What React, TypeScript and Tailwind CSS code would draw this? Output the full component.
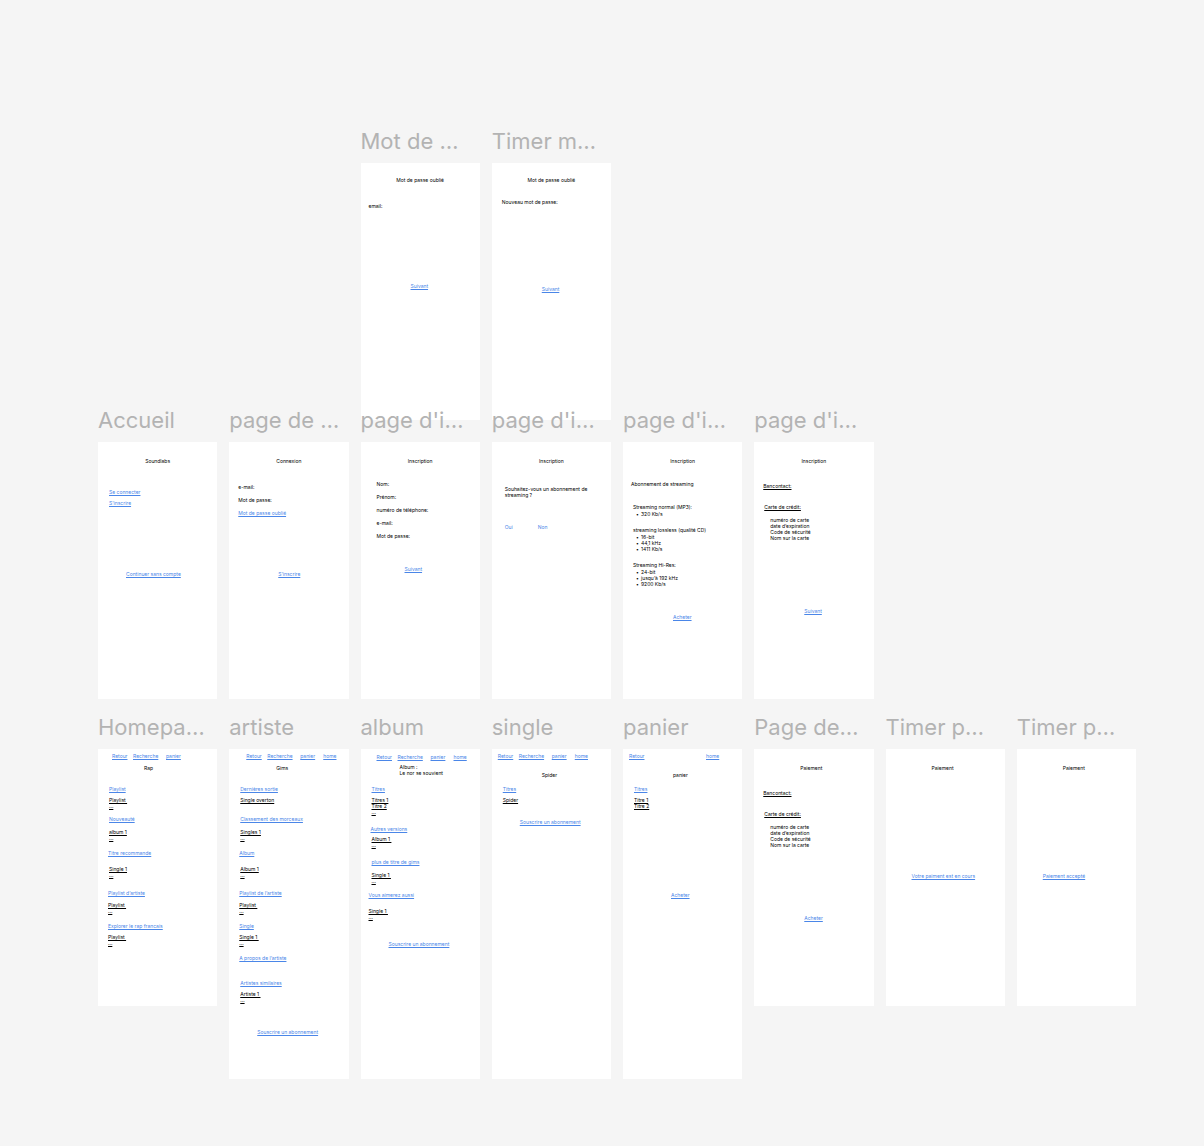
import React from "react";

type TextProps = { className?: string; children: React.ReactNode };

function Label({ className = "", children }: TextProps) {
  return <p className={`whitespace-pre ${className}`}>{children}</p>;
}

function Underlined({ className = "", children }: TextProps) {
  return (
    <p className={`whitespace-pre ${className}`}>
      <span className="underline underline-offset-1">{children}</span>
    </p>
  );
}

function Link({ className = "", children }: TextProps) {
  return (
    <a href="#" className={`self-start whitespace-pre text-[#4a86e8] underline underline-offset-1 ${className}`}>
      {children}
    </a>
  );
}

function Heading({ className = "", children }: TextProps) {
  return <h3 className={className}>{children}</h3>;
}

function Frame({ title, tall = false, className = "", children }: TextProps & { title: string; tall?: boolean }) {
  return (
    <section className={`min-w-0 ${className}`}>
      <h2 className="mb-1.5 whitespace-nowrap text-[22px] leading-8 text-[#b3b3b3]">{title}</h2>
      <div className={`flex flex-col bg-white text-[5px] leading-[6px] text-black ${tall ? "min-h-[330px]" : "min-h-[257px]"}`}>
        {children}
      </div>
    </section>
  );
}

function Nav({ className = "", home = true }: { className?: string; home?: boolean }) {
  return (
    <nav className={`grid grid-cols-[21px_33px_23px_auto] ${className}`}>
      <Link className="justify-self-start">Retour</Link>
      <Link className="justify-self-start">Recherche</Link>
      <Link className="justify-self-start">panier</Link>
      {home && <Link className="justify-self-start">home</Link>}
    </nav>
  );
}

function CardDetails() {
  return (
    <>
      <Underlined className="ml-[9px] mt-[19px]">Bancontact:</Underlined>
      <Underlined className="ml-[10px] mt-[15px]">Carte de crédit:</Underlined>
      <div className="ml-[16px] mt-[7px]">
        <Label>numéro de carte</Label>
        <Label>date d’expiration</Label>
        <Label>Code de sécurité</Label>
        <Label>Nom sur la carte</Label>
      </div>
    </>
  );
}

function Plan({ name, features, className = "" }: { name: string; features: string[]; className?: string }) {
  return (
    <div className={`ml-[10px] ${className}`}>
      <Label>{name}</Label>
      <ul className="ml-[3px] mt-px">
        {features.map((feature) => (
          <li key={feature} className="flex before:w-[5px] before:content-['•']">
            {feature}
          </li>
        ))}
      </ul>
    </div>
  );
}

export default function App() {
  return (
    <main className="min-h-screen bg-[#f5f5f5] pb-16 pl-[98px] pr-[68px] pt-[125px] font-['Inter',sans-serif]">
      <div className="grid grid-cols-8 items-start gap-x-3">
        <Frame title="Mot de …" className="col-start-3">
          <Heading className="mt-[14px] text-center">Mot de passe oublié</Heading>
          <Label className="ml-[8px] mt-[20px]">email:</Label>
          <Link className="ml-[50px] mt-[74px]">Suivant</Link>
        </Frame>
        <Frame title="Timer m…">
          <Heading className="mt-[14px] text-center">Mot de passe oublié</Heading>
          <Label className="ml-[10px] mt-[16px]">Nouveau mot de passe:</Label>
          <Link className="ml-[50px] mt-[81px]">Suivant</Link>
        </Frame>
      </div>

      <div className="-mt-4 grid grid-cols-8 items-start gap-x-3">
        <Frame title="Accueil">
          <Heading className="mt-[16px] text-center">Soundlabs</Heading>
          <Link className="ml-[11px] mt-[25px]">Se connecter</Link>
          <Link className="ml-[11px] mt-[5px]">S’inscrire</Link>
          <Link className="ml-[28px] mt-[65px]">Continuer sans compte</Link>
        </Frame>
        <Frame title="page de …">
          <Heading className="mt-[16px] text-center">Connexion</Heading>
          <Label className="ml-[9px] mt-[20px]">e-mail:</Label>
          <Label className="ml-[9px] mt-[7px]">Mot de passe:</Label>
          <Link className="ml-[9px] mt-[7px]">Mot de passe oublié</Link>
          <Link className="ml-[49px] mt-[55px]">S’inscrire</Link>
        </Frame>
        <Frame title="page d'i…">
          <Heading className="mt-[16px] text-center">Inscription</Heading>
          <div className="ml-[16px] mt-[17px] flex flex-col gap-[7px]">
            <Label>Nom:</Label>
            <Label>Prénom:</Label>
            <Label>numéro de téléphone:</Label>
            <Label>e-mail:</Label>
            <Label>Mot de passe:</Label>
          </div>
          <Link className="ml-[44px] mt-[27px]">Suivant</Link>
        </Frame>
        <Frame title="page d'i…">
          <Heading className="mt-[16px] text-center">Inscription</Heading>
          <Label className="ml-[13px] mt-[22px]">{"Souhaitez-vous un abonnement de\nstreaming ?"}</Label>
          <div className="ml-[13px] mt-[26px] grid grid-cols-[33px_auto] justify-items-start text-[#4a86e8]">
            <a href="#">Oui</a>
            <a href="#">Non</a>
          </div>
        </Frame>
        <Frame title="page d'i…">
          <Heading className="mt-[16px] text-center">Inscription</Heading>
          <Label className="ml-[8px] mt-[17px]">Abonnement de streaming</Label>
          <Plan className="mt-[17px]" name="Streaming normal (MP3):" features={["320 Kb/s"]} />
          <Plan className="mt-[10px]" name="streaming lossless (qualité CD)" features={["16-bit", "44,1 kHz", "1411 Kb/s"]} />
          <Plan className="mt-[10px]" name="Streaming Hi-Res:" features={["24-bit", "jusqu’à 192 kHz", "9200 Kb/s"]} />
          <Link className="ml-[50px] mt-[27px]">Acheter</Link>
        </Frame>
        <Frame title="page d'i…">
          <Heading className="mt-[16px] text-center">Inscription</Heading>
          <CardDetails />
          <Link className="ml-[50px] mt-[67px]">Suivant</Link>
        </Frame>
      </div>

      <div className="mt-3 grid grid-cols-8 items-start gap-x-3">
        <Frame title="Homepa…">
          <Nav className="ml-[14px] mt-[4px]" home={false} />
          <Heading className="ml-[46px] mt-[6px]">Rap</Heading>
          <Link className="ml-[11px] mt-[15px]">Playlist</Link>
          <Underlined className="ml-[11px] mt-[5px]">{"Playlist "}</Underlined>
          <Underlined className="ml-[11px]">...</Underlined>
          <Link className="ml-[11px] mt-[7px]">Nouveauté</Link>
          <Underlined className="ml-[11px] mt-[7px]">album 1</Underlined>
          <Underlined className="ml-[11px]">...</Underlined>
          <Link className="ml-[10px] mt-[9px]">Titre recommande</Link>
          <Underlined className="ml-[11px] mt-[10px]">Single 1</Underlined>
          <Underlined className="ml-[11px]">...</Underlined>
          <Link className="ml-[10px] mt-[12px]">Playlist d’artiste</Link>
          <Underlined className="ml-[10px] mt-[6px]">{"Playlist "}</Underlined>
          <Underlined className="ml-[10px]">...</Underlined>
          <Link className="ml-[10px] mt-[9px]">Explorer le rap francais</Link>
          <Underlined className="ml-[10px] mt-[5px]">{"Playlist "}</Underlined>
          <Underlined className="ml-[10px]">...</Underlined>
        </Frame>
        <Frame title="artiste" tall>
          <Nav className="ml-[17px] mt-[4px]" />
          <Heading className="ml-[47px] mt-[6px]">Gims</Heading>
          <Link className="ml-[11px] mt-[15px]">Dernières sortie</Link>
          <Underlined className="ml-[11px] mt-[5px]">Single overton</Underlined>
          <Link className="ml-[11px] mt-[13px]">Classement des morceaux</Link>
          <Underlined className="ml-[11px] mt-[7px]">Singles 1</Underlined>
          <Underlined className="ml-[11px]">...</Underlined>
          <Link className="ml-[10px] mt-[9px]">Album</Link>
          <Underlined className="ml-[11px] mt-[10px]">Album 1</Underlined>
          <Underlined className="ml-[11px]">...</Underlined>
          <Link className="ml-[10px] mt-[12px]">Playlist de l’artiste</Link>
          <Underlined className="ml-[10px] mt-[6px]">{"Playlist "}</Underlined>
          <Underlined className="ml-[10px]">...</Underlined>
          <Link className="ml-[10px] mt-[9px]">Single</Link>
          <Underlined className="ml-[10px] mt-[5px]">{"Single 1 "}</Underlined>
          <Underlined className="ml-[10px]">...</Underlined>
          <Link className="ml-[10px] mt-[9px]">A propos de l’artiste</Link>
          <Link className="ml-[11px] mt-[19px]">Artistes similaires</Link>
          <Underlined className="ml-[11px] mt-[5px]">{"Artiste 1 "}</Underlined>
          <Underlined className="ml-[11px]">...</Underlined>
          <Link className="ml-[28px] mt-[26px]">Souscrire un abonnement</Link>
        </Frame>
        <Frame title="album" tall>
          <Nav className="ml-[16px] mt-[5px]" />
          <Heading className="ml-[39px] mt-[4px] whitespace-pre">{"Album :\nLe nor se souvient"}</Heading>
          <Link className="ml-[11px] mt-[10px]">Titres</Link>
          <Underlined className="ml-[11px] mt-[5px]">Titres 1</Underlined>
          <Underlined className="ml-[11px]">Titre 2</Underlined>
          <Underlined className="ml-[11px]">...</Underlined>
          <Link className="ml-[10px] mt-[11px]">Autres versions</Link>
          <Underlined className="ml-[11px] mt-[4px]">{"Album 1 "}</Underlined>
          <Underlined className="ml-[11px]">...</Underlined>
          <Link className="ml-[11px] mt-[11px]">plus de titre de gims</Link>
          <Underlined className="ml-[11px] mt-[7px]">{"Single 1 "}</Underlined>
          <Underlined className="ml-[11px]">...</Underlined>
          <Link className="ml-[8px] mt-[8px]">Vous aimerez aussi</Link>
          <Underlined className="ml-[8px] mt-[10px]">{"Single 1 "}</Underlined>
          <Underlined className="ml-[8px]">...</Underlined>
          <Link className="ml-[28px] mt-[21px]">Souscrire un abonnement</Link>
        </Frame>
        <Frame title="single" tall>
          <Nav className="ml-[6px] mt-[4px]" />
          <Heading className="ml-[50px] mt-[13px]">Spider</Heading>
          <Link className="ml-[11px] mt-[8px]">Titres</Link>
          <Underlined className="ml-[11px] mt-[5px]">Spider</Underlined>
          <Link className="ml-[28px] mt-[16px]">Souscrire un abonnement</Link>
        </Frame>
        <Frame title="panier" tall>
          <nav className="ml-[6px] mt-[4px] grid grid-cols-[77px_auto]">
            <Link className="justify-self-start">Retour</Link>
            <Link className="justify-self-start">home</Link>
          </nav>
          <Heading className="ml-[50px] mt-[13px]">panier</Heading>
          <Link className="ml-[11px] mt-[8px]">Titres</Link>
          <Underlined className="ml-[11px] mt-[5px]">Titre 1</Underlined>
          <Underlined className="ml-[11px]">Titre 2</Underlined>
          <Link className="ml-[48px] mt-[83px]">Acheter</Link>
        </Frame>
        <Frame title="Page de…">
          <Heading className="ml-[46px] mt-[16px]">Paiement</Heading>
          <CardDetails />
          <Link className="ml-[50px] mt-[67px]">Acheter</Link>
        </Frame>
        <Frame title="Timer p…">
          <Heading className="ml-[46px] mt-[16px]">Paiement</Heading>
          <Link className="ml-[26px] mt-[102px]">Votre paiment est en cours</Link>
        </Frame>
        <Frame title="Timer p…">
          <Heading className="ml-[46px] mt-[16px]">Paiement</Heading>
          <Link className="ml-[26px] mt-[102px]">Paiement accepté</Link>
        </Frame>
      </div>
    </main>
  );
}
